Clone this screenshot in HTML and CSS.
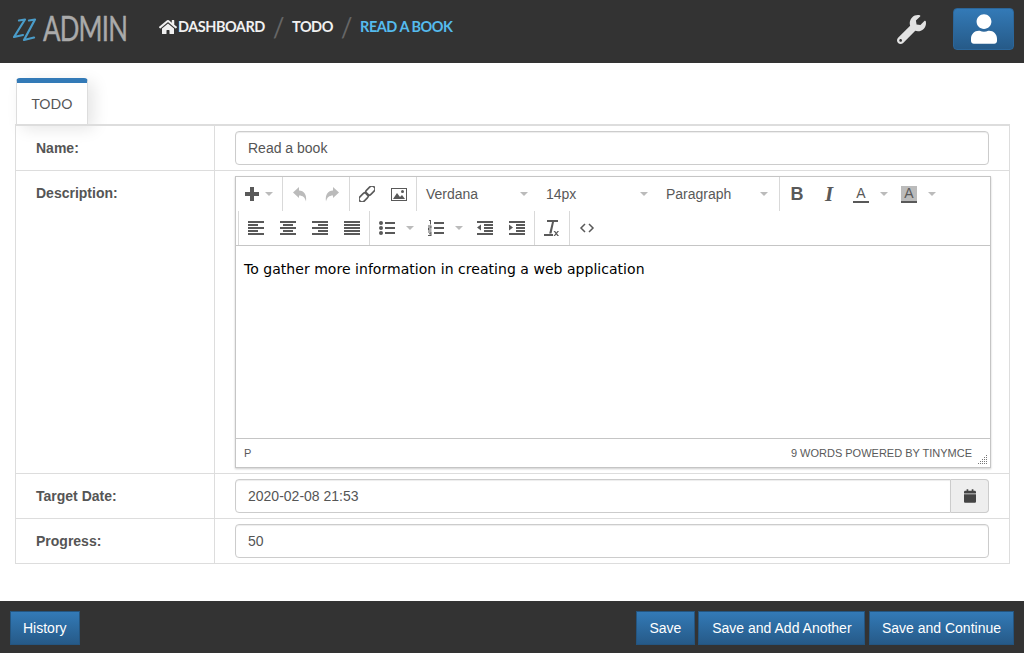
FILE: index.html
```html
<!DOCTYPE html>
<html lang="en">
<head>
    <meta charset="UTF-8">
    <meta name="viewport" content="width=device-width, initial-scale=1.0">
    <title>Read a book</title>
    <link rel="stylesheet" href="styles.css">
</head>
<body>
    <svg class="sprites" width="0" height="0" aria-hidden="true">
        <symbol id="i-left" viewBox="0 0 16 16"><path d="M0 1h16v2H0zM0 4h10v2H0zM0 7h16v2H0zM0 10h10v2H0zM0 13h16v2H0z"/></symbol>
        <symbol id="i-center" viewBox="0 0 16 16"><path d="M0 1h16v2H0zM3 4h10v2H3zM0 7h16v2H0zM3 10h10v2H3zM0 13h16v2H0z"/></symbol>
        <symbol id="i-right" viewBox="0 0 16 16"><path d="M0 1h16v2H0zM6 4h10v2H6zM0 7h16v2H0zM6 10h10v2H6zM0 13h16v2H0z"/></symbol>
        <symbol id="i-justify" viewBox="0 0 16 16"><path d="M0 1h16v2H0zM0 4h16v2H0zM0 7h16v2H0zM0 10h16v2H0zM0 13h16v2H0z"/></symbol>
    </svg>

    <header class="topbar">
        <div class="logo">
            <svg class="logo-mark" width="24" height="26" viewBox="0 0 24 26"><path d="M6 2.500l6-1L1 19l9-2M16 2.500l6-1L11 22l10-2.500" fill="none" stroke="#4a9cc9" stroke-width="2.200" stroke-linecap="round" stroke-linejoin="round"/></svg>
            <span class="logo-text">ADMIN</span>
        </div>
        <nav class="crumbs">
            <svg class="crumb-home" width="18" height="16" viewBox="0 0 576 512"><path fill="#f0f0f0" d="M280.37 148.26L96 300.11V464a16 16 0 0 0 16 16l112.06-.29a16 16 0 0 0 15.92-16V368a16 16 0 0 1 16-16h64a16 16 0 0 1 16 16v95.64a16 16 0 0 0 16 16.05L464 480a16 16 0 0 0 16-16V300L295.67 148.26a12.19 12.19 0 0 0-15.3 0zM571.6 251.47L488 182.56V44.05a12 12 0 0 0-12-12h-56a12 12 0 0 0-12 12v72.61L318.47 43a48 48 0 0 0-61 0L4.34 251.47a12 12 0 0 0-1.6 16.9l25.5 31A12 12 0 0 0 45.15 301l235.22-193.74a12.19 12.19 0 0 1 15.3 0L530.9 301a12 12 0 0 0 16.9-1.6l25.5-31a12 12 0 0 0-1.7-16.93z"/></svg>
            <a class="crumb">DASHBOARD</a>
            <span class="crumb-sep">/</span>
            <a class="crumb">TODO</a>
            <span class="crumb-sep">/</span>
            <a class="crumb crumb-active">READ A BOOK</a>
        </nav>
        <div class="topbar-right">
            <svg width="29" height="29" viewBox="0 0 512 512"><path fill="#e2e2e2" d="M507.73 109.1c-2.24-9.03-13.54-12.09-20.12-5.51l-74.36 74.36-67.88-11.31-11.31-67.88 74.36-74.36c6.62-6.62 3.43-17.9-5.66-20.16-47.38-11.74-99.55.91-136.58 37.93-39.64 39.64-50.55 97.1-34.05 147.2L18.74 402.76c-24.99 24.99-24.99 65.51 0 90.5 24.99 24.99 65.51 24.99 90.5 0l213.21-213.21c50.12 16.71 107.47 5.68 147.37-34.22 37.07-37.07 49.7-89.32 37.91-136.73zM64 472c-13.25 0-24-10.75-24-24 0-13.26 10.75-24 24-24s24 10.74 24 24c0 13.25-10.75 24-24 24z"/></svg>
            <button class="user-btn"><svg width="26" height="30" viewBox="0 0 448 512"><path fill="#fff" d="M224 256c70.7 0 128-57.3 128-128S294.7 0 224 0 96 57.3 96 128s57.3 128 128 128zm89.6 32h-16.7c-22.2 10.2-46.9 16-72.9 16s-50.6-5.8-72.9-16h-16.7C60.2 288 0 348.2 0 422.4V464c0 26.5 21.5 48 48 48h352c26.5 0 48-21.5 48-48v-41.6c0-74.2-60.2-134.4-134.4-134.4z"/></svg></button>
        </div>
    </header>

    <main class="content">
        <div class="tabs"><div class="tab">TODO</div></div>
        <div class="form-table">
            <div class="form-row">
                <label class="form-label">Name:</label>
                <div class="form-field"><input class="text-input" type="text" value="Read a book"></div>
            </div>
            <div class="form-row">
                <label class="form-label">Description:</label>
                <div class="form-field">
                    <div class="editor">
                        <div class="toolbar">
                            <div class="tb-row">
                                <div class="tb-group tb-insert">
                                    <span class="tb-btn tb-menu">
                                        <svg class="ic" width="16" height="16" viewBox="0 0 16 16"><path d="M6 1h4v5h5v4h-5v5H6v-5H1V6h5z"/></svg>
                                        <i class="caret"></i>
                                    </span>
                                </div>
                                <div class="tb-group">
                                    <span class="tb-btn"><svg class="ic off" width="16" height="16" viewBox="0 0 16 16"><path d="M1 6.500L7 1v3.500c5 0 8 4 7 11-1-4-3-6-7-6V12z"/></svg></span>
                                    <span class="tb-btn"><svg class="ic off" width="16" height="16" viewBox="0 0 16 16"><path d="M15 6.500L9 1v3.500c-5 0-8 4-7 11 1-4 3-6 7-6V12z"/></svg></span>
                                </div>
                                <div class="tb-group">
                                    <span class="tb-btn"><svg width="16" height="16" viewBox="0 0 16 16" fill="none" stroke="#595959" stroke-width="1.600"><g transform="rotate(-45 8 8)"><rect x="-2" y="5" width="10.500" height="6" rx="3"/><rect x="7.500" y="5" width="10.500" height="6" rx="3"/></g></svg></span>
                                    <span class="tb-btn"><svg width="16" height="16" viewBox="0 0 16 16"><path fill-rule="evenodd" fill="#595959" d="M0 2h16v13H0zM1 3v11h14V3z"/><path fill="#595959" d="M2 13l4-6 3 4 2-2 3 4z"/><circle cx="11.500" cy="5.500" r="1.500" fill="#595959"/></svg></span>
                                </div>
                                <div class="tb-group">
                                    <span class="tb-list">Verdana<i class="caret"></i></span>
                                    <span class="tb-list">14px<i class="caret"></i></span>
                                    <span class="tb-list">Paragraph<i class="caret"></i></span>
                                </div>
                                <div class="tb-group tb-last">
                                    <span class="tb-btn tb-glyph tb-bold">B</span>
                                    <span class="tb-btn tb-glyph tb-italic">I</span>
                                    <span class="tb-btn tb-menu tb-color">
                                        <span class="color-a">A</span>
                                        <i class="caret"></i>
                                    </span>
                                    <span class="tb-btn tb-menu tb-color">
                                        <span class="color-a color-bg">A</span>
                                        <i class="caret"></i>
                                    </span>
                                </div>
                            </div>
                            <div class="tb-row">
                                <div class="tb-group tb-first">
                                    <span class="tb-btn"><svg class="ic" width="16" height="16"><use href="#i-left"/></svg></span>
                                    <span class="tb-btn"><svg class="ic" width="16" height="16"><use href="#i-center"/></svg></span>
                                    <span class="tb-btn"><svg class="ic" width="16" height="16"><use href="#i-right"/></svg></span>
                                    <span class="tb-btn"><svg class="ic" width="16" height="16"><use href="#i-justify"/></svg></span>
                                </div>
                                <div class="tb-group">
                                    <span class="tb-btn tb-menu tb-list-btn">
                                        <svg class="ic" width="16" height="16" viewBox="0 0 16 16"><path d="M6 2h10v2H6zM6 7h10v2H6zM6 12h10v2H6z"/><circle cx="2" cy="3" r="2"/><circle cx="2" cy="8" r="2"/><circle cx="2" cy="13" r="2"/></svg>
                                        <i class="caret"></i>
                                    </span>
                                    <span class="tb-btn tb-menu tb-list-btn">
                                        <svg class="ic" width="16" height="16" viewBox="0 0 16 16"><path d="M6 2h10v2H6zM6 7h10v2H6zM6 12h10v2H6zM1 0h2v4.500H2V1H1zM0 5.500h3.500v3H1v1h2.500v1H0v-3h2.500v-1H0zM0 11.500h3.500V16H0v-1h2.500v-.8H1v-1h1.500v-.7H0z"/></svg>
                                        <i class="caret"></i>
                                    </span>
                                    <span class="tb-btn"><svg class="ic" width="16" height="16" viewBox="0 0 16 16"><path d="M0 1h16v2H0zM7 4h9v2H7zM7 7h9v2H7zM7 10h9v2H7zM0 13h16v2H0zM4 4.500v6L0 7.500z"/></svg></span>
                                    <span class="tb-btn"><svg class="ic" width="16" height="16" viewBox="0 0 16 16"><path d="M0 1h16v2H0zM7 4h9v2H7zM7 7h9v2H7zM7 10h9v2H7zM0 13h16v2H0zM0 4.500v6l4-3z"/></svg></span>
                                </div>
                                <div class="tb-group">
                                    <span class="tb-btn"><svg class="ic" width="16" height="16" viewBox="0 0 16 16"><path d="M3 0h11v2h-4L7.500 13.500h-2.300L8 2H3zM0 14h9v2H0zM9.500 11h1.600l1.200 1.400L13.500 11H15l-2 2.400 2 2.600h-1.600l-1.200-1.500L11 16H9.500l2-2.600z"/></svg></span>
                                </div>
                                <div class="tb-group tb-last">
                                    <span class="tb-btn"><svg width="16" height="16" viewBox="0 0 16 16" fill="none" stroke="#595959" stroke-width="1.500"><path d="M6 4L2 8l4 4M10 4l4 4-4 4"/></svg></span>
                                </div>
                            </div>
                        </div>
                        <div class="edit-area"><p>To gather more information in creating a web application</p></div>
                        <div class="statusbar">
                            <span>P</span>
                            <span class="status-right">9 WORDS POWERED BY TINYMCE</span>
                            <svg class="resize" width="10" height="10" viewBox="0 0 10 10"><path fill="#777" d="M8 0h1v1H8zM6 2h1v1H6zM8 2h1v1H8zM4 4h1v1H4zM6 4h1v1H6zM8 4h1v1H8zM2 6h1v1H2zM4 6h1v1H4zM6 6h1v1H6zM8 6h1v1H8zM0 8h1v1H0zM2 8h1v1H2zM4 8h1v1H4zM6 8h1v1H6zM8 8h1v1H8z"/></svg>
                        </div>
                    </div>
                </div>
            </div>
            <div class="form-row">
                <label class="form-label">Target Date:</label>
                <div class="form-field">
                    <div class="input-group">
                        <input class="text-input" type="text" value="2020-02-08 21:53">
                        <span class="addon"><svg width="12" height="14" viewBox="0 0 448 512"><path fill="#444" d="M12 192h424c6.600 0 12 5.400 12 12v260c0 26.500-21.500 48-48 48H48c-26.500 0-48-21.500-48-48V204c0-6.600 5.400-12 12-12zm436-44v-36c0-26.500-21.500-48-48-48h-48V12c0-6.600-5.400-12-12-12h-40c-6.600 0-12 5.400-12 12v52H160V12c0-6.600-5.400-12-12-12h-40c-6.600 0-12 5.400-12 12v52H48C21.500 64 0 85.500 0 112v36c0 6.600 5.400 12 12 12h424c6.600 0 12-5.400 12-12z"/></svg></span>
                    </div>
                </div>
            </div>
            <div class="form-row">
                <label class="form-label">Progress:</label>
                <div class="form-field"><input class="text-input" type="text" value="50"></div>
            </div>
        </div>
    </main>

    <footer class="actions">
        <button class="btn">History</button>
        <div class="actions-right">
            <button class="btn btn-save">Save</button>
            <button class="btn btn-add">Save and Add Another</button>
            <button class="btn">Save and Continue</button>
        </div>
    </footer>
</body>
</html>
```
FILE: styles.css
```css
* {
    box-sizing: border-box;
}
html, body {
    height: 100%;
}
body {
    margin: 0;
    display: flex;
    flex-direction: column;
    height: 653px;
    overflow: hidden;
    background-color: #fff;
    font-family: "Liberation Sans", Arial, sans-serif;
    font-size: 14px;
    color: #333;
}
.sprites {
    position: absolute;
}

/* top bar */
.topbar {
    display: flex;
    align-items: center;
    height: 63px;
    padding: 0 10px 5px 13px;
    background-color: #333;
}
.logo {
    display: flex;
    align-items: center;
    width: 146px;
    height: 44px;
    margin-bottom: 3px;
}
.logo-mark {
    flex: none;
    margin-top: 6px;
}
.logo-text {
    margin-left: 6px;
    font-family: Lato, sans-serif;
    font-size: 34px;
    color: #aaa;
    letter-spacing: -1px;
    -webkit-text-stroke: .4px #aaa;
    transform: scaleX(.76);
    transform-origin: left center;
}
.crumbs {
    display: flex;
    align-items: center;
    margin-bottom: 5px;
    font-family: Lato, sans-serif;
    font-size: 14.5px;
    font-weight: 700;
    letter-spacing: -.5px;
}
.crumb-home {
    margin-right: 1px;
}
.crumb {
    color: #f0f0f0;
}
.crumb-active {
    color: #55bbee;
}
.crumb-sep {
    margin: 0 8px;
    font-size: 26px;
    font-weight: 400;
    color: #666;
}
.topbar-right {
    display: flex;
    align-items: center;
    gap: 27px;
    margin-left: auto;
}
.user-btn {
    display: flex;
    align-items: center;
    justify-content: center;
    width: 61px;
    height: 42px;
    border: 1px solid #2b669a;
    border-radius: 4px;
    background: linear-gradient(#337ab7, #265a88);
}

/* tab and form */
.content {
    flex: 1;
    padding: 15px 14px 0 15px;
}
.tabs {
    display: flex;
    padding-left: 1px;
}
.tab {
    position: relative;
    width: 72px;
    height: 47px;
    margin-bottom: -1px;
    border: 1px solid #ddd;
    border-top: 5px solid #337ab7;
    border-bottom: 0;
    border-radius: 4px 4px 0 0;
    background-color: #fff;
    box-shadow: 6px 4px 16px rgba(0, 0, 0, .1);
    font-family: Lato, sans-serif;
    font-size: 14px;
    line-height: 42px;
    text-align: center;
    color: #555;
}
.form-table {
    position: relative;
    border: 1px solid #ddd;
    border-top-width: 2px;
    border-bottom: 0;
}
.form-row {
    display: flex;
    border-bottom: 1px solid #ddd;
}
.form-label {
    flex: none;
    width: 199px;
    padding: 14px 0 0 20px;
    border-right: 1px solid #ddd;
    font-weight: 700;
    color: #555;
}
.form-field {
    flex: 1;
    min-width: 0;
    padding: 5px 20px;
}
.text-input {
    display: block;
    width: 100%;
    height: 34px;
    padding: 6px 12px;
    border: 1px solid #ccc;
    border-radius: 4px;
    box-shadow: inset 0 1px 1px rgba(0, 0, 0, .075);
    font-family: inherit;
    font-size: 14px;
    color: #555;
}
.input-group {
    display: flex;
}
.input-group .text-input {
    flex: 1;
    border-radius: 4px 0 0 4px;
}
.addon {
    display: flex;
    align-items: center;
    justify-content: center;
    width: 38px;
    border: 1px solid #ccc;
    border-left: 0;
    border-radius: 0 4px 4px 0;
    background-color: #eee;
}

/* editor */
.editor {
    margin-right: -2px;
    border: 1px solid #c5c5c5;
    box-shadow: 0 1px 2px rgba(0, 0, 0, .2);
}
.toolbar {
    height: 69px;
    border-bottom: 1px solid #c5c5c5;
}
.tb-row {
    display: flex;
    height: 34px;
}
.tb-group {
    display: flex;
    padding: 0 1px;
    border-right: 1px solid #d9d9d9;
}
.tb-insert {
    margin-left: 1px;
}
.tb-first {
    margin-left: 2px;
    border-left: 1px solid #d9d9d9;
}
.tb-last {
    border-right: 0;
}
.tb-btn {
    display: flex;
    align-items: center;
    justify-content: center;
    width: 32px;
}
.tb-menu {
    justify-content: flex-start;
    padding-left: 8px;
}
.tb-insert .tb-btn {
    width: 43px;
    padding-left: 6px;
}
.tb-insert .caret {
    margin-left: 5px;
}
.tb-list-btn {
    width: 49px;
}
.tb-list-btn .caret {
    margin-left: 11px;
}
.tb-color {
    width: 48px;
}
.tb-color .caret {
    margin-left: 11px;
}
.ic {
    fill: #595959;
}
.ic.off {
    fill: #bbb;
}
.caret {
    flex: none;
    width: 0;
    height: 0;
    border-left: 4px solid transparent;
    border-right: 4px solid transparent;
    border-top: 4px solid #bbb;
}
.tb-list {
    display: flex;
    align-items: center;
    justify-content: space-between;
    width: 120px;
    padding: 0 10px 0 8px;
    color: #595959;
}
.tb-glyph {
    font-size: 18px;
    color: #595959;
}
.tb-bold {
    font-family: "Liberation Sans", sans-serif;
    font-weight: 700;
}
.tb-italic {
    font-family: "Liberation Serif", serif;
    font-size: 21px;
    font-style: italic;
    font-weight: 700;
}
.color-a {
    flex: none;
    width: 16px;
    height: 17px;
    border-bottom: 2px solid #595959;
    font-size: 14px;
    line-height: 15px;
    text-align: center;
    color: #595959;
}
.color-bg {
    background-color: #bbb;
}
.edit-area {
    height: 192px;
    padding: 15px 8px 0;
    font-family: "DejaVu Sans", Verdana, sans-serif;
    font-size: 14px;
    letter-spacing: .035px;
    color: #000;
}
.edit-area p {
    margin: 0;
}
.statusbar {
    position: relative;
    display: flex;
    justify-content: space-between;
    height: 29px;
    padding: 8px 18px 0 8px;
    border-top: 1px solid #c5c5c5;
    font-size: 11px;
    color: #595959;
}
.resize {
    position: absolute;
    right: 2px;
    bottom: 2px;
}

/* bottom bar */
.actions {
    display: flex;
    justify-content: space-between;
    align-items: flex-start;
    height: 52px;
    padding: 10px 10px 0;
    background-color: #333;
}
.actions-right {
    display: flex;
    gap: 3.5px;
}
.btn {
    height: 34px;
    padding: 0 12px;
    border: 1px solid #245580;
    background: linear-gradient(#337ab7, #265a88);
    font-family: inherit;
    font-size: 14px;
    color: #fff;
}
.btn-save {
    width: 59px;
}
.btn-add {
    width: 167px;
}
```
